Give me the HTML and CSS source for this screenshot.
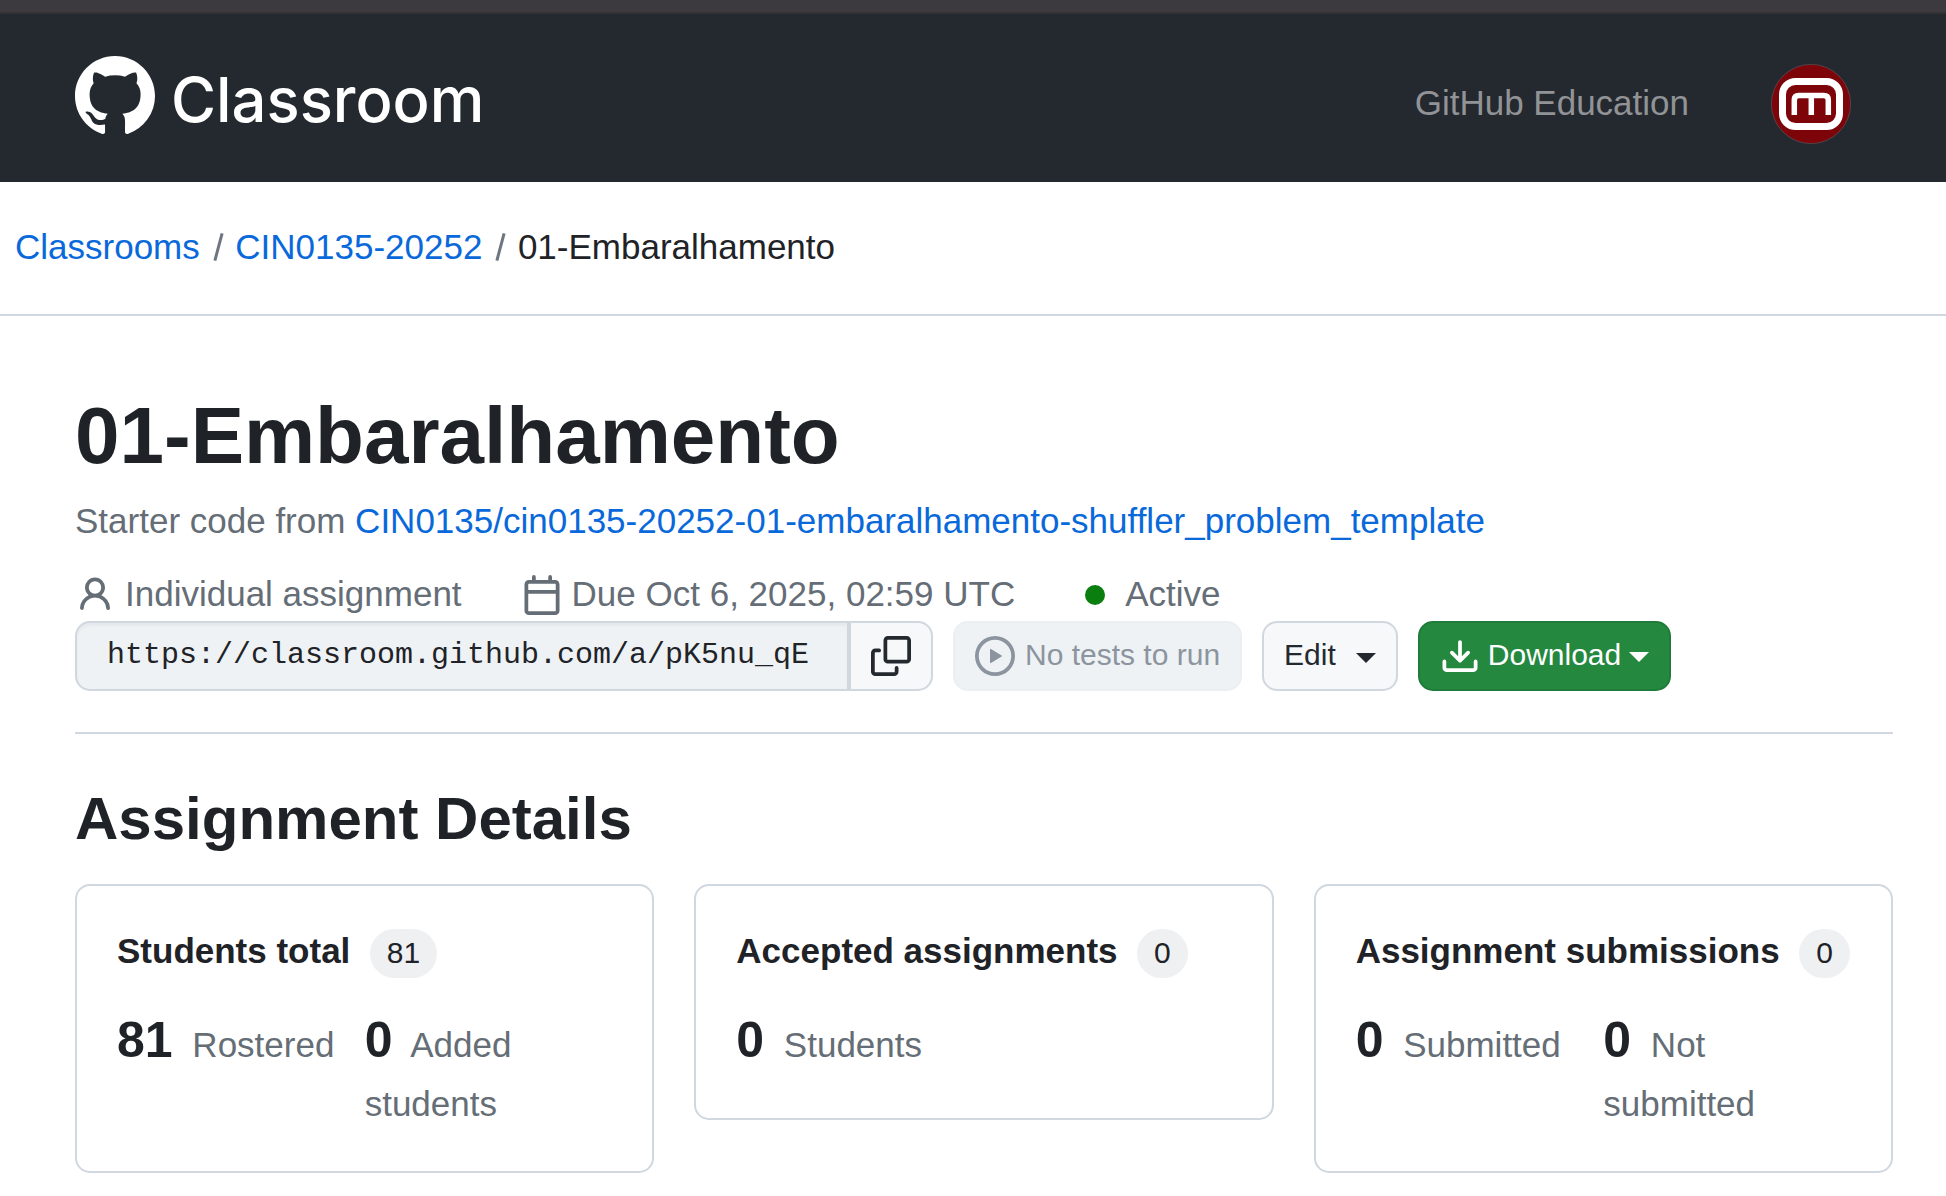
FILE: index.html
```html
<!DOCTYPE html>
<html lang="en">
<head>
<meta charset="utf-8">
<title>01-Embaralhamento</title>
<link rel="stylesheet" href="styles.css">
</head>
<body>
<div class="chrome-edge"></div>
<header class="header">
  <a class="brand">
    <svg class="mark" viewBox="0 0 16 16"><path d="M8 0C3.58 0 0 3.58 0 8c0 3.54 2.29 6.53 5.47 7.59.4.07.55-.17.55-.38 0-.19-.01-.82-.01-1.49-2.01.37-2.53-.49-2.69-.94-.09-.23-.48-.94-.82-1.13-.28-.15-.68-.52-.01-.53.63-.01 1.08.58 1.23.82.72 1.21 1.87.87 2.33.66.07-.52.28-.87.51-1.07-1.78-.2-3.64-.89-3.64-3.95 0-.87.31-1.59.82-2.15-.08-.2-.36-1.02.08-2.12 0 0 .67-.21 2.2.82.64-.18 1.32-.27 2-.27.68 0 1.36.09 2 .27 1.53-1.04 2.2-.82 2.2-.82.44 1.1.16 1.92.08 2.12.51.56.82 1.27.82 2.15 0 3.07-1.87 3.75-3.65 3.95.29.25.54.73.54 1.48 0 1.07-.01 1.93-.01 2.2 0 .21.15.46.55.38A8.013 8.013 0 0016 8c0-4.42-3.58-8-8-8z"/></svg>
    <span class="brand-name">Classroom</span>
  </a>
  <nav class="header-nav">
    <a class="header-link">GitHub Education</a>
    <svg class="avatar" viewBox="0 0 80 80">
      <circle cx="40" cy="40" r="39.600" fill="#7d0509" stroke="#5f4a50" stroke-width=".8"/>
      <g class="avatar-logo">
        <rect x="11.500" y="17.500" width="57" height="45" rx="13" stroke-width="7"/>
        <path d="M23.300 51V36q0-4.500 4.500-4.500h25q4.500 0 4.500 4.500V51M40.300 31.500V51" stroke-width="5.500"/>
      </g>
    </svg>
  </nav>
</header>
<nav class="crumbs">
  <a class="crumb link">Classrooms</a><i class="slash"></i><a class="crumb link">CIN0135-20252</a><i class="slash"></i><span class="crumb">01-Embaralhamento</span>
</nav>
<main class="page">
  <h1 class="title">01-Embaralhamento</h1>
  <p class="starter">Starter code from <a class="link">CIN0135/cin0135-20252-01-embaralhamento-shuffler_problem_template</a></p>
  <div class="meta">
    <span class="meta-item"><svg class="icon" viewBox="0 0 16 16"><path d="M10.561 8.073a6.005 6.005 0 0 1 3.432 5.142.75.75 0 1 1-1.498.07 4.5 4.5 0 0 0-8.99 0 .75.75 0 0 1-1.498-.07 6.004 6.004 0 0 1 3.431-5.142 3.999 3.999 0 1 1 5.123 0ZM10.500 5a2.500 2.500 0 1 0-5 0 2.500 2.500 0 0 0 5 0Z"/></svg>Individual assignment</span>
    <span class="meta-item"><svg class="icon" viewBox="0 0 16 16"><path d="M4.750 0a.75.75 0 0 1 .75.75V2h5V.75a.75.75 0 0 1 1.500 0V2h1.250c.966 0 1.750.784 1.750 1.750v10.500A1.750 1.750 0 0 1 13.250 16H2.750A1.750 1.750 0 0 1 1 14.250V3.750C1 2.784 1.784 2 2.750 2H4V.75A.75.75 0 0 1 4.750 0ZM2.500 7.500v6.750c0 .138.112.25.25.25h10.500a.25.25 0 0 0 .25-.25V7.500Zm10.750-4H2.750a.25.25 0 0 0-.25.25V6h11V3.750a.25.25 0 0 0-.25-.25Z"/></svg>Due Oct 6, 2025, 02:59 UTC</span>
    <span class="meta-item"><i class="dot"></i>Active</span>
  </div>
  <div class="actions">
    <div class="invite">
      <div class="invite-url">https://classroom.github.com/a/pK5nu_qE</div>
      <button class="btn copy" aria-label="Copy"><svg class="icon" viewBox="0 0 16 16"><path d="M0 6.750C0 5.784.784 5 1.750 5h1.500a.75.75 0 0 1 0 1.500h-1.500a.25.25 0 0 0-.25.25v7.500c0 .138.112.25.25.25h7.500a.25.25 0 0 0 .25-.25v-1.500a.75.75 0 0 1 1.500 0v1.500A1.750 1.750 0 0 1 9.250 16h-7.500A1.750 1.750 0 0 1 0 14.250ZM5 1.750C5 .784 5.784 0 6.750 0h7.500C15.216 0 16 .784 16 1.750v7.500A1.750 1.750 0 0 1 14.250 11h-7.500A1.750 1.750 0 0 1 5 9.250Zm1.750-.25a.25.25 0 0 0-.25.25v7.500c0 .138.112.25.25.25h7.500a.25.25 0 0 0 .25-.25v-7.500a.25.25 0 0 0-.25-.25Z"/></svg></button>
    </div>
    <button class="btn tests" disabled><svg class="icon" viewBox="0 0 16 16"><path d="M8 0a8 8 0 1 1 0 16A8 8 0 0 1 8 0ZM1.500 8a6.500 6.500 0 1 0 13 0 6.500 6.500 0 0 0-13 0Zm4.879-2.773 4.264 2.559a.25.25 0 0 1 0 .428l-4.264 2.559A.25.25 0 0 1 6 10.559V5.442a.25.25 0 0 1 .379-.215Z"/></svg>No tests to run</button>
    <button class="btn edit">Edit<i class="caret"></i></button>
    <button class="btn download"><svg class="icon" viewBox="0 0 16 16"><path d="M2.750 14A1.750 1.750 0 0 1 1 12.250v-2.500a.75.75 0 0 1 1.500 0v2.500c0 .138.112.25.25.25h10.500a.25.25 0 0 0 .25-.25v-2.500a.75.75 0 0 1 1.500 0v2.500A1.750 1.750 0 0 1 13.250 14Z"/><path d="M7.250 7.689V2a.75.75 0 0 1 1.500 0v5.689l1.970-1.969a.749.749 0 1 1 1.060 1.060l-3.250 3.250a.749.749 0 0 1-1.060 0L4.220 6.780a.749.749 0 1 1 1.060-1.060l1.970 1.969Z"/></svg>Download<i class="caret"></i></button>
  </div>
  <h2 class="subtitle">Assignment Details</h2>
  <div class="cards">
    <section class="card">
      <h3 class="card-head">Students total<span class="counter">81</span></h3>
      <div class="stats">
        <div class="stat"><b class="num">81</b> Rostered</div>
        <div class="stat"><b class="num">0</b> Added students</div>
      </div>
    </section>
    <section class="card">
      <h3 class="card-head">Accepted assignments<span class="counter">0</span></h3>
      <div class="stats">
        <div class="stat"><b class="num">0</b> Students</div>
      </div>
    </section>
    <section class="card">
      <h3 class="card-head">Assignment submissions<span class="counter">0</span></h3>
      <div class="stats">
        <div class="stat"><b class="num">0</b> Submitted</div>
        <div class="stat"><b class="num">0</b> Not submitted</div>
      </div>
    </section>
  </div>
</main>
</body>
</html>
```
FILE: styles.css
```css
* { box-sizing: border-box; }
html, body { overflow: hidden; }
body {
  margin: 0;
  height: 1196px;
  background: #fff;
  color: #1f2328;
  font: 35px/51px "Liberation Sans", Arial, sans-serif;
}
h1, h2, h3, p { margin: 0; }
svg { display: block; fill: currentColor; flex: none; }
.link { color: #0969da; }

.chrome-edge { height: 14px; background: #3c3a3e; border-bottom: 2px solid #323235; }
.header {
  display: flex;
  justify-content: space-between;
  height: 168px;
  padding: 42px 95px 0 75px;
  background: #24292f;
}
.brand { display: flex; color: #fff; }
.mark { width: 80px; height: 80px; }
.brand-name {
  margin: 8px 0 0 16px;
  font: 500 61.5px/72px Inter, sans-serif;
}
.header-nav { display: flex; gap: 82px; padding-top: 8px; }
.header-link { color: #919396; line-height: 77px; }
.avatar { width: 80px; height: 80px; }
.avatar-logo { fill: none; stroke: #fff; filter: blur(.6px); }

.crumbs {
  display: flex;
  align-items: flex-start;
  height: 134px;
  padding: 39px 15px 0;
  border-bottom: 2px solid #d0d7de;
}
.slash {
  width: 3px;
  height: 28px;
  margin: 12px 15.5px 0 17px;
  background: #6e7781;
  transform: rotate(15deg);
}

.page { padding: 75px 53px 0 75px; }
.title { font-size: 80px; line-height: 89px; }
.starter { padding-top: 15px; color: #656d76; }
.meta { display: flex; padding-top: 22px; color: #656d76; }
.meta-item { display: flex; align-items: flex-start; margin-right: 60px; }
.icon { width: 40px; height: 40px; }
.meta .icon { margin: 7px 10px 0 0; }
.dot { width: 20px; height: 20px; margin: 17px 20px 0 10px; border-radius: 50%; background: #0a7f0f; }

.actions {
  display: flex;
  gap: 20px;
  margin-top: 2px;
  padding-bottom: 41px;
  border-bottom: 2px solid #d0d7de;
}
.invite { display: flex; width: 858px; }
.invite-url {
  flex: 1;
  height: 70px;
  padding-left: 30px;
  border: 2px solid #d0d7de;
  border-radius: 15px 0 0 15px;
  background: #eef2f5;
  box-shadow: inset 0 3px 2px rgba(208, 215, 222, .3);
  font: 30px/64px "Liberation Mono", monospace;
}
.btn {
  display: flex;
  align-items: flex-start;
  height: 70px;
  padding: 0 20px;
  border: 2px solid #d0d7de;
  border-radius: 15px;
  background: #f6f8fa;
  color: #24292f;
  font: 30px/63px "Liberation Sans", Arial, sans-serif;
}
.btn .icon { margin-top: 13px; }
.copy { border-radius: 0 15px 15px 0; }
.tests { gap: 10px; border-color: #ebeef2; background: #eef2f5; color: #8c959f; }
.caret {
  margin-top: 29px;
  border: 10px solid transparent;
  border-top-color: currentColor;
  border-bottom: 0;
}
.edit .caret { margin: 30px 0 0 20px; }
.download { gap: 8px; border-color: #1f7b39; background: #24883f; color: #fff; }
.download .icon { margin-top: 14px; }

.subtitle { padding-top: 47px; font-size: 60px; line-height: 75px; }
.cards { display: grid; grid-template-columns: repeat(3, 1fr); gap: 40px; align-items: start; padding-top: 28px; }
.card { padding: 39px 40px 40px; border: 2px solid #d0d7de; border-radius: 15px; }
.card-head { display: flex; align-items: flex-start; height: 53px; font-size: 35px; line-height: 51px; }
.counter {
  height: 49px;
  margin: 4px 0 0 19.500px;
  padding: 0 17px;
  border-radius: 25px;
  background: #eff0f2;
  font-size: 30px;
  font-weight: 400;
  line-height: 47px;
}
.stats { display: grid; grid-template-columns: 1fr 1fr; padding-top: 25px; color: #656d76; line-height: 1.5; }
.num { margin-right: 10px; color: #1f2328; font-size: 50px; }
```
